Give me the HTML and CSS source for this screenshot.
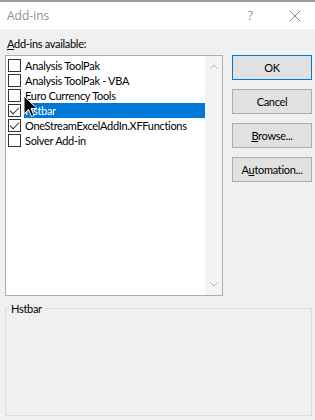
FILE: index.html
```html
<!DOCTYPE html>
<html lang="en">
<head>
  <meta charset="UTF-8">
  <title>Add-ins</title>
  <link rel="stylesheet" href="styles.css">
</head>
<body>
  <div class="dialog">
    <div class="titlebar">
      <span class="title">Add-ins</span>
      <span class="help">?</span>
      <svg class="close" width="12" height="12" viewBox="0 0 12 12">
        <path d="M1 1 L11 11 M11 1 L1 11" stroke="#8a8a8a" stroke-width="1" fill="none"/>
      </svg>
    </div>

    <div class="content">
      <div class="caption"><u>A</u>dd-ins available:</div>

      <div class="main">
        <div class="listbox">
          <ul class="items">
            <li><span class="check"></span><span class="name">Analysis ToolPak</span></li>
            <li><span class="check"></span><span class="name">Analysis ToolPak - VBA</span></li>
            <li><span class="check"></span><span class="name">Euro Currency Tools</span></li>
            <li class="selected"><span class="check checked"></span><span class="name">Hstbar</span></li>
            <li><span class="check checked"></span><span class="name">OneStreamExcelAddIn.XFFunctions</span></li>
            <li><span class="check"></span><span class="name">Solver Add-in</span></li>
          </ul>
          <div class="scrollbar">
            <svg width="8" height="5" viewBox="0 0 8 5"><path d="M0.5 4.5 L4 1 L7.5 4.5" stroke="#b0b0b0" fill="none"/></svg>
            <svg width="8" height="5" viewBox="0 0 8 5"><path d="M0.5 0.5 L4 4 L7.5 0.5" stroke="#b0b0b0" fill="none"/></svg>
          </div>
        </div>

        <div class="buttons">
          <button class="btn default">OK</button>
          <button class="btn">Cancel</button>
          <button class="btn"><u>B</u>rowse...</button>
          <button class="btn">A<u>u</u>tomation...</button>
        </div>
      </div>

      <fieldset class="group">
        <legend>Hstbar</legend>
      </fieldset>
    </div>

    <!-- mouse pointer over the list -->
    <svg class="cursor" width="15" height="23" viewBox="0 0 15 23">
      <path d="M1 1 L1 19 L5.5 14.5 L8.5 21.5 L11 20.5 L8 13.5 L14 13.5 Z" fill="#000" stroke="#fff" stroke-width="1"/>
    </svg>
  </div>
</body>
</html>
```

FILE: styles.css
```css
* {
  box-sizing: border-box;
}

body {
  margin: 0;
  background: #f0f0f0;
  font-family: 'Lato', 'Open Sans', sans-serif;
  font-size: 11px;
  letter-spacing: -0.3px;
  color: #000;
}

.dialog {
  position: relative;
  width: 315px;
  height: 420px;
  background: #f0f0f0;
}

.titlebar {
  height: 29px;
  background: #fff;
  border-top: 2px solid #9a9a9a;
  display: flex;
  align-items: center;
  padding: 0 14px 0 7px;
  font-family: 'Open Sans', sans-serif;
  letter-spacing: 0;
}

.title {
  flex: 1;
  font-size: 12px;
  color: #8f8f8f;
}

.help {
  font-size: 12px;
  color: #8f8f8f;
  margin-right: 36px;
}

.content {
  padding: 7px 3px 0 5px;
}

.caption {
  height: 19px;
  padding-left: 2px;
  line-height: 15px;
}

.main {
  display: flex;
  gap: 9px;
}

.listbox {
  width: 218px;
  height: 241px;
  background: #fff;
  border: 1px solid #adadad;
  display: flex;
}

.items {
  list-style: none;
  margin: 0;
  padding: 2px 0 0 2px;
  flex: 1;
}

.items li {
  height: 15px;
  display: flex;
  align-items: center;
}

.check {
  width: 13px;
  height: 13px;
  border: 1px solid #333;
  background: #fff;
  margin-right: 3px;
  flex: none;
  position: relative;
}

.check.checked::after {
  content: "";
  position: absolute;
  left: 3px;
  top: 0px;
  width: 4px;
  height: 8px;
  border: solid #333;
  border-width: 0 1px 1px 0;
  transform: rotate(45deg);
}

.name {
  line-height: 15px;
  padding: 0 1px;
  white-space: nowrap;
}

.selected .name {
  flex: 1;
  background: #0078d7;
  color: #fff;
}

.scrollbar {
  width: 17px;
  background: #f4f4f4;
  display: flex;
  flex-direction: column;
  justify-content: space-between;
  align-items: center;
  padding: 8px 0 8px;
}

.buttons {
  display: flex;
  flex-direction: column;
  gap: 9px;
}

.btn {
  width: 80px;
  height: 25px;
  background: #e1e1e1;
  border: 1px solid #adadad;
  font-family: inherit;
  font-size: inherit;
  letter-spacing: inherit;
  color: #000;
  padding: 0;
}

.btn.default {
  border: 1px solid #0078d7;
  box-shadow: inset 0 0 0 1px #e1e1e1;
}

.group {
  margin: 6px 0 0 0;
  width: 307px;
  height: 114px;
  border: 1px solid #dcdcdc;
  padding: 0;
}

.group legend {
  margin-left: 3px;
  padding: 0 2px;
}

.cursor {
  position: absolute;
  left: 23px;
  top: 95px;
}
```
